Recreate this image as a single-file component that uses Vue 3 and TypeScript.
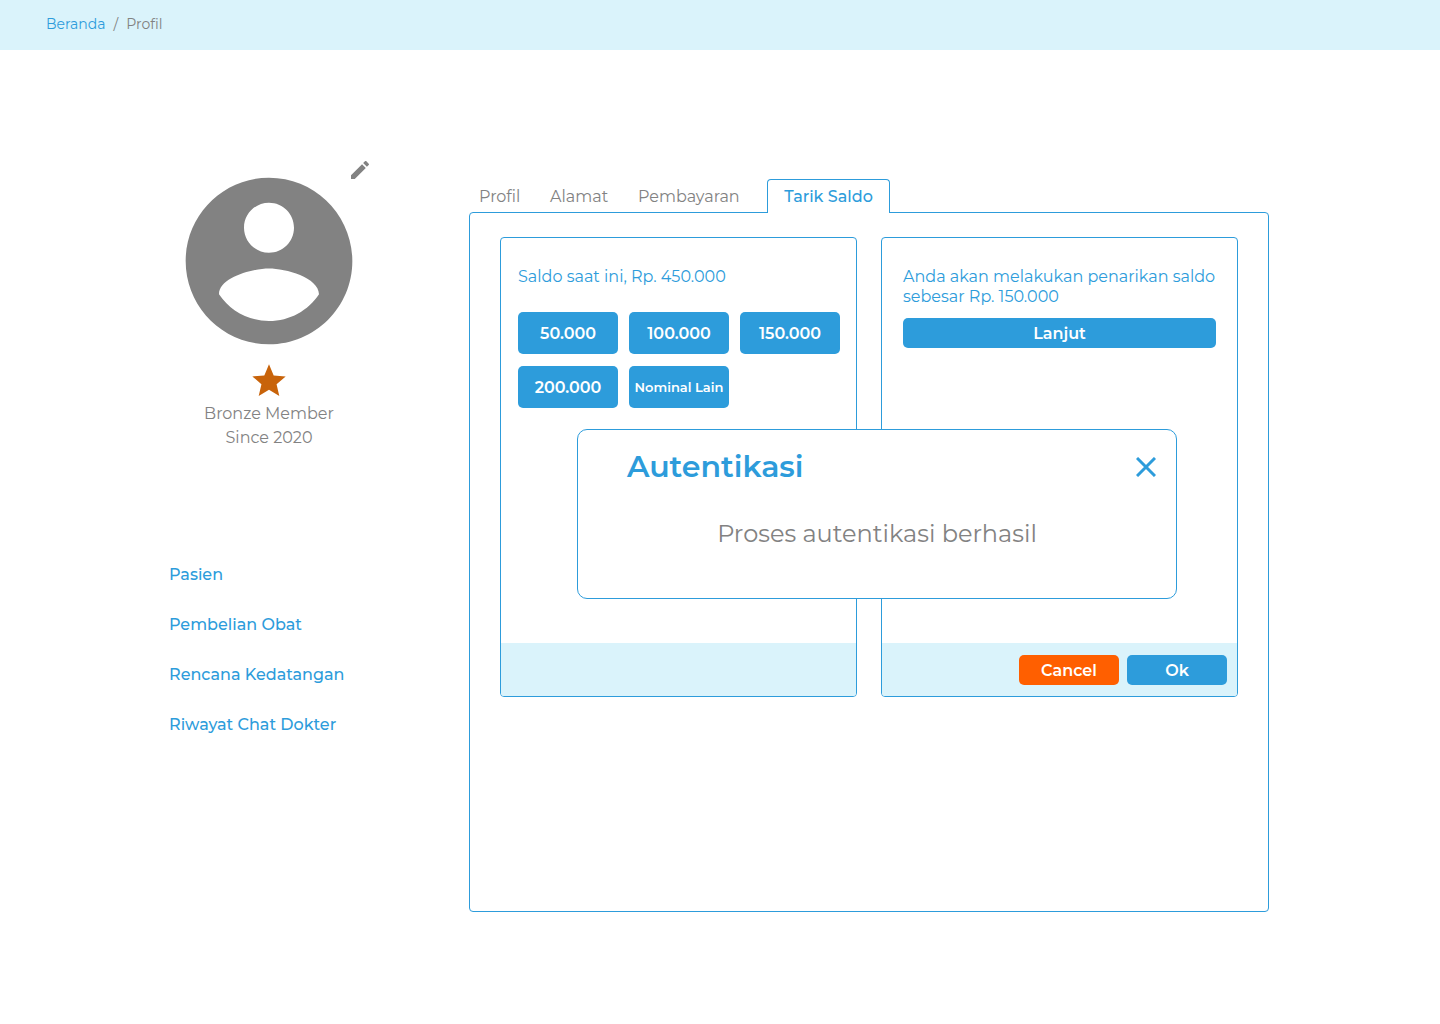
<script setup lang="ts">
import { ref } from 'vue'

const tabs: string[] = ['Profil', 'Alamat', 'Pembayaran', 'Tarik Saldo']
const activeTab = ref<string>('Tarik Saldo')

const amounts: string[] = ['50.000', '100.000', '150.000', '200.000']
const links: string[] = ['Pasien', 'Pembelian Obat', 'Rencana Kedatangan', 'Riwayat Chat Dokter']

const dialogOpen = ref<boolean>(true)
</script>

<template>
  <div class="page">
    <header class="topbar">
      <nav class="crumbs" aria-label="Breadcrumb">
        <a href="#">Beranda</a>
        <span>/</span>
        <span>Profil</span>
      </nav>
    </header>

    <main class="layout">
      <aside class="sidebar">
        <div class="member">
          <svg class="avatar" viewBox="0 0 24 24" aria-hidden="true">
            <path d="M12 2C6.48 2 2 6.48 2 12s4.48 10 10 10 10-4.48 10-10S17.52 2 12 2zm0 3c1.66 0 3 1.34 3 3s-1.34 3-3 3-3-1.34-3-3 1.34-3 3-3zm0 14.2c-2.5 0-4.71-1.28-6-3.22.03-1.99 4-3.08 6-3.08 1.99 0 5.97 1.09 6 3.08-1.29 1.94-3.5 3.22-6 3.22z" />
          </svg>
          <button class="edit" type="button" aria-label="Edit">
            <svg viewBox="3 3 18 18" aria-hidden="true">
              <path d="M3 17.25V21h3.75L17.81 9.94l-3.75-3.75L3 17.25zM20.71 7.04c.39-.39.39-1.02 0-1.41l-2.34-2.34c-.39-.39-1.02-.39-1.41 0l-1.83 1.83 3.75 3.75 1.83-1.83z" />
            </svg>
          </button>
          <svg class="star" viewBox="0 0 24 24" aria-hidden="true">
            <path d="M12 17.27L18.18 21l-1.64-7.03L22 9.24l-7.19-.61L12 2 9.19 8.63 2 9.24l5.46 4.73L5.82 21z" />
          </svg>
          <p>Bronze Member<br />Since 2020</p>
        </div>
        <nav class="links">
          <a v-for="link in links" :key="link" href="#">{{ link }}</a>
        </nav>
      </aside>

      <section class="content">
        <div class="tabs" role="tablist">
          <button
            v-for="tab in tabs"
            :key="tab"
            type="button"
            role="tab"
            class="tab"
            :class="{ active: tab === activeTab }"
            :aria-selected="tab === activeTab"
            @click="activeTab = tab"
          >
            {{ tab }}
          </button>
        </div>

        <div class="panel">
          <article class="card">
            <div class="card-body balance">
              <p>Saldo saat ini, Rp. 450.000</p>
              <div class="amounts">
                <button v-for="amount in amounts" :key="amount" type="button" class="btn">{{ amount }}</button>
                <button type="button" class="btn small">Nominal Lain</button>
              </div>
            </div>
            <footer class="card-foot"></footer>
          </article>

          <article class="card">
            <div class="card-body confirm">
              <p>Anda akan melakukan penarikan saldo sebesar Rp. 150.000</p>
              <button type="button" class="btn">Lanjut</button>
            </div>
            <footer class="card-foot">
              <button type="button" class="btn cancel">Cancel</button>
              <button type="button" class="btn">Ok</button>
            </footer>
          </article>

          <div v-if="dialogOpen" class="dialog" role="dialog" aria-labelledby="dialog-title">
            <div class="dialog-head">
              <h2 id="dialog-title">Autentikasi</h2>
              <button type="button" class="close" aria-label="Tutup" @click="dialogOpen = false">
                <svg viewBox="0 0 20 20" aria-hidden="true">
                  <path d="M1 1L19 19M19 1L1 19" />
                </svg>
              </button>
            </div>
            <p>Proses autentikasi berhasil</p>
          </div>
        </div>
      </section>
    </main>
  </div>
</template>

<style>
body {
  margin: 0;
  background: #fff;
}
</style>

<style scoped>
.page {
  --blue: #2d9cdb;
  --pale: #daf3fb;
  --gray: #828282;
  color: var(--gray);
  font-family: Montserrat, Inter, sans-serif;
  font-size: 16px;
  font-weight: 400;
  line-height: 20px;
}

.page * {
  box-sizing: border-box;
}

p,
h2 {
  margin: 0;
}

a {
  color: var(--blue);
  text-decoration: none;
}

button {
  padding: 0;
  border: 0;
  background: none;
  color: inherit;
  font: inherit;
  cursor: pointer;
}

svg {
  display: block;
}

.topbar {
  height: 50px;
  padding: 14px 46px;
  background: var(--pale);
}

.crumbs {
  display: flex;
  gap: 8px;
  font-size: 14px;
}

.layout {
  display: flex;
  gap: 100px;
  padding: 111px 171px 112px 169px;
}

.sidebar {
  flex: 0 0 200px;
}

.member {
  position: relative;
  line-height: 24px;
  text-align: center;
}

.avatar {
  width: 200px;
  height: 200px;
  fill: var(--gray);
}

.edit {
  position: absolute;
  top: 0;
  right: 0;
}

.edit svg {
  width: 18px;
  height: 18px;
  fill: var(--gray);
}

.star {
  width: 40px;
  height: 40px;
  margin: 0 auto 1px;
  fill: #c8630a;
}

.links {
  display: flex;
  flex-direction: column;
  gap: 30px;
  margin-top: 115px;
  font-weight: 500;
  white-space: nowrap;
}

.content {
  flex: 1;
  min-width: 0;
  padding-top: 18px;
}

.tabs {
  position: relative;
  z-index: 1;
  display: grid;
  grid-template-columns: 71px 88px 129px 123px;
  height: 34px;
  margin: 0 0 -1px 10px;
}

.tab {
  padding-top: 2px;
  text-align: left;
}

.tab.active {
  padding-top: 0;
  border: 1px solid var(--blue);
  border-bottom: 0;
  border-radius: 4px 4px 0 0;
  background: #fff;
  color: var(--blue);
  font-weight: 500;
  text-align: center;
}

.panel {
  position: relative;
  display: flex;
  align-items: flex-start;
  gap: 24px;
  min-height: 700px;
  padding: 24px 30px;
  border: 1px solid var(--blue);
  border-radius: 4px;
}

.card {
  display: flex;
  flex: 1;
  flex-direction: column;
  min-width: 0;
  min-height: 460px;
  overflow: hidden;
  border: 1px solid var(--blue);
  border-radius: 4px;
  color: var(--blue);
}

.card-body {
  flex: 1;
}

.balance {
  padding: 29px 16px 29px 17px;
}

.confirm {
  padding: 29px 21px;
}

.amounts {
  display: grid;
  grid-template-columns: repeat(3, 1fr);
  gap: 12px 11px;
  margin-top: 25px;
}

.btn {
  height: 30px;
  padding-top: 2px;
  border-radius: 5px;
  background: var(--blue);
  color: #fff;
  font-weight: 600;
}

.amounts .btn {
  height: 42px;
}

.btn.small {
  padding-top: 0;
  font-size: 13px;
  white-space: nowrap;
}

.confirm .btn {
  width: 100%;
  margin-top: 11px;
}

.card-foot {
  display: flex;
  justify-content: flex-end;
  gap: 8px;
  height: 53px;
  padding: 12px 10px;
  background: var(--pale);
}

.card-foot .btn {
  width: 100px;
}

.btn.cancel {
  background: #ff5f00;
}

.dialog {
  position: absolute;
  top: 216px;
  right: 91px;
  left: 107px;
  height: 170px;
  padding: 18px 20px 0 49px;
  border: 1px solid var(--blue);
  border-radius: 10px;
  background: #fff;
}

.dialog-head {
  display: flex;
  align-items: center;
  justify-content: space-between;
  color: var(--blue);
}

.dialog h2 {
  font-size: 30px;
  font-weight: 600;
  line-height: 38px;
}

.close svg {
  width: 20px;
  height: 20px;
  fill: none;
  stroke: var(--blue);
  stroke-width: 3;
}

.dialog p {
  margin: 33px 29px 0 0;
  font-size: 24px;
  line-height: 30px;
  text-align: center;
}
</style>
